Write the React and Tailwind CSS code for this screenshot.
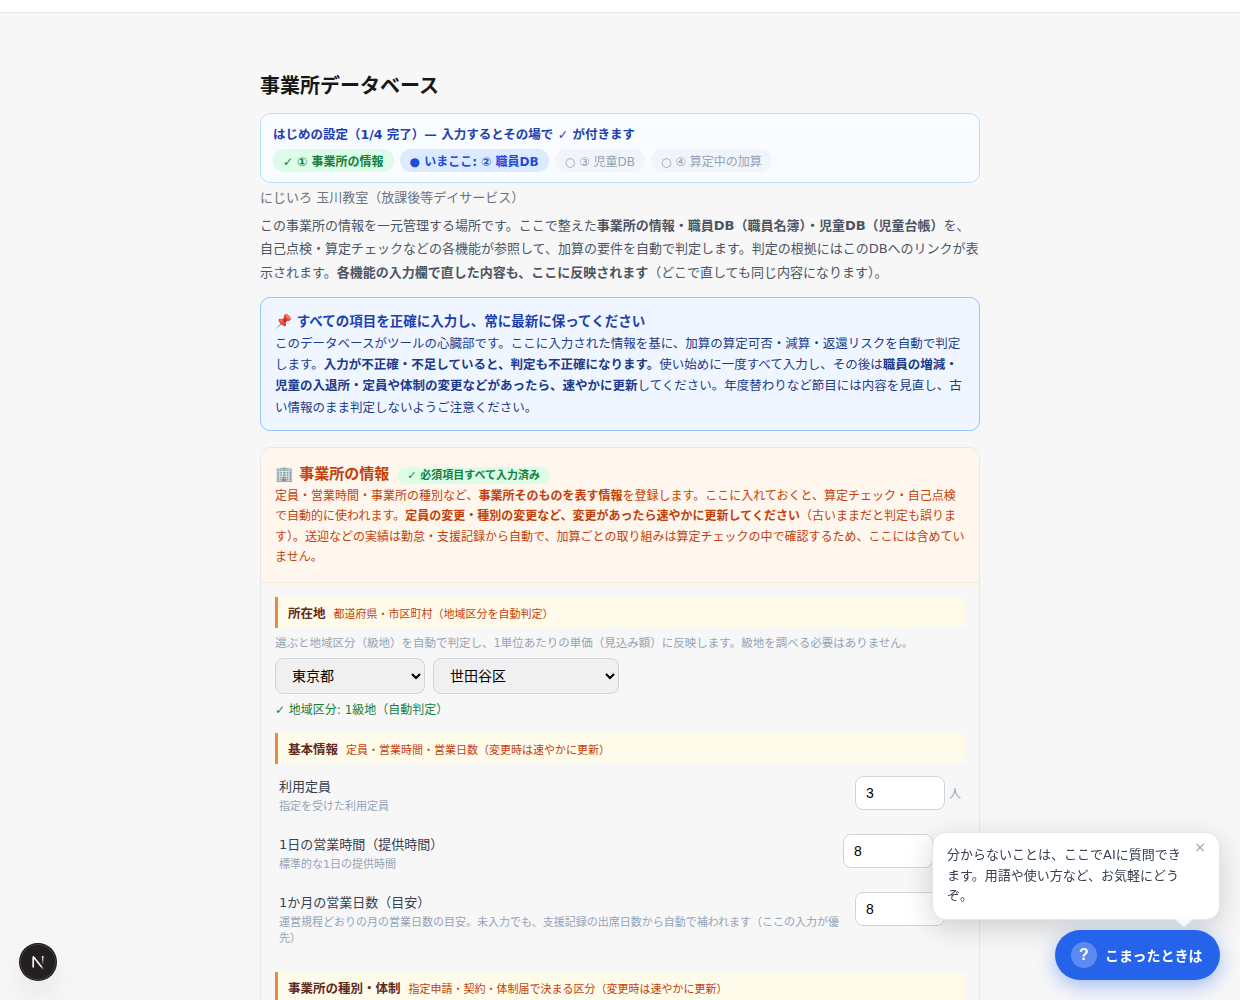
import React from "react";

const steps = [
  { text: "✓ ① 事業所の情報", cls: "bg-[#dcfce7] text-[#15803d] font-bold" },
  { text: "● いまここ: ② 職員DB", cls: "bg-[#dbeafe] text-[#1d4ed8] font-bold" },
  { text: "○ ③ 児童DB", cls: "bg-[#f1f5f9] text-[#94a3b8]" },
  { text: "○ ④ 算定中の加算", cls: "bg-[#f1f5f9] text-[#94a3b8]" },
];

function SectionBar({ title, note }) {
  return (
    <div className="flex h-[31px] items-baseline gap-2 rounded-r-[4px] border-l-[3px] border-[#ea8a3a] bg-[#fffbeb] pt-[7px] pl-[10px] leading-5">
      <span className="text-[12.5px] font-bold text-[#5f2a1c]">{title}</span>
      <span className="text-[11px] text-[#c2410c]">{note}</span>
    </div>
  );
}

function Field({ label, note, value, unit, className }) {
  return (
    <div className={"flex items-start gap-3 px-1 " + className}>
      <div className="min-w-0 flex-1">
        <div className="h-[23px] text-[13px] leading-[22px] text-[#374151]">{label}</div>
        <div className="text-[11px] leading-4 text-[#94a3b8]">{note}</div>
      </div>
      <div className="flex items-center gap-1">
        <input
          className="h-[34px] w-[90px] rounded-lg border border-[#d1d5db] bg-white px-[10px] font-['Liberation_Sans',sans-serif] text-[14px] text-black"
          defaultValue={value}
        />
        <span className="pt-px text-[12px] text-[#94a3b8]">{unit}</span>
      </div>
    </div>
  );
}

function Choice({ value, className }) {
  return (
    <select
      className={
        "h-9 appearance-auto rounded-lg border border-[#d1d5db] bg-[#f0f0f0] px-3 text-[14px] text-black " + className
      }
    >
      <option>{value}</option>
    </select>
  );
}

export default function App() {
  return (
    <div
      lang="ja"
      className="h-[1000px] overflow-hidden bg-[#f7f7f7] font-['DejaVu_Sans','Noto_Sans_CJK_JP',sans-serif] text-[#171717]"
    >
      <div className="h-[13px] border-b border-[#e5e7eb] bg-white" />
      <main className="mx-auto w-[720px] pt-[58px]">
        <h1 className="mb-3 h-[30px] text-[20px] leading-[30px] font-bold">事業所データベース</h1>

        <section className="h-[70px] rounded-[10px] border border-[#bae0fd] bg-[#f8fbff] px-3 pt-[11px]">
          <div className="mb-1 h-5 text-[12.5px] leading-5 font-bold text-[#1e40af]">
            はじめの設定（1/4 完了）— 入力するとその場で ✓ が付きます
          </div>
          <div className="flex gap-[6px]">
            {steps.map((s) => (
              <span
                key={s.text}
                className={"h-[23px] rounded-full px-[10px] pt-[2px] text-[12px] leading-[23px] whitespace-nowrap " + s.cls}
              >
                {s.text}
              </span>
            ))}
          </div>
        </section>

        <div className="h-[31px] pt-1 text-[13px] leading-[22px] text-[#6b7280]">
          にじいろ 玉川教室（放課後等デイサービス）
        </div>
        <p className="h-[83px] text-[13px] leading-[23.4px] text-[#4b5563]">
          この事業所の情報を一元管理する場所です。ここで整えた<b>事業所の情報・職員DB（職員名簿）・児童DB（児童台帳）</b>
          を、自己点検・算定チェックなどの各機能が参照して、加算の要件を自動で判定します。判定の根拠にはこのDBへのリンクが表示されます。
          <b>各機能の入力欄で直した内容も、ここに反映されます</b>（どこで直しても同じ内容になります）。
        </p>

        <section className="h-[134px] rounded-[10px] border border-[#93c5fd] bg-[#eff6ff] px-[14px] py-3">
          <div className="h-[22.9px] text-[13.5px] leading-[23px] font-bold text-[#1e40af]">
            📌 すべての項目を正確に入力し、常に最新に保ってください
          </div>
          <p className="text-[12.5px] leading-[21.25px] text-[#1e3a8a]">
            このデータベースがツールの心臓部です。ここに入力された情報を基に、加算の算定可否・減算・返還リスクを自動で判定します。
            <b>入力が不正確・不足していると、判定も不正確になります。</b>使い始めに一度すべて入力し、その後は
            <b>職員の増減・児童の入退所・定員や体制の変更などがあったら、速やかに更新</b>
            してください。年度替わりなど節目には内容を見直し、古い情報のまま判定しないようご注意ください。
          </p>
        </section>

        <section className="mt-4 overflow-hidden rounded-xl border border-[#e5e7eb] pb-10">
          <header className="h-[135px] border-b border-[#fdebd0] bg-[#fff7ed] px-[14px] pt-[15px]">
            <div className="flex h-[23px] items-center gap-2">
              <h2 className="text-[15px] leading-[23px] font-bold text-[#c2410c]">🏢 事業所の情報</h2>
              <span className="mt-px h-[17px] rounded-full bg-[#dcfce7] px-[10px] text-[11px] leading-[17px] font-bold text-[#15803d]">
                ✓ 必須項目すべて入力済み
              </span>
            </div>
            <p className="text-[12px] leading-[20.4px] text-[#c2410c]">
              定員・営業時間・事業所の種別など、<b>事業所そのものを表す情報</b>
              を登録します。ここに入れておくと、算定チェック・自己点検で自動的に使われます。
              <b>定員の変更・種別の変更など、変更があったら速やかに更新してください</b>
              （古いままだと判定も誤ります）。送迎などの実績は勤怠・支援記録から自動で、加算ごとの取り組みは算定チェックの中で確認するため、ここには含めていません。
            </p>
          </header>

          <div className="px-[14px] pt-[14px]">
            <SectionBar title="所在地" note="都道府県・市区町村（地域区分を自動判定）" />
            <div className="mt-[5px] mb-[5px] h-5 text-[11.5px] leading-5 text-[#94a3b8]">
              選ぶと地域区分（級地）を自動で判定し、1単位あたりの単価（見込み額）に反映します。級地を調べる必要はありません。
            </div>
            <div className="flex gap-2">
              <Choice value="東京都" className="w-[150px]" />
              <Choice value="世田谷区" className="w-[186px]" />
            </div>
            <div className="mt-[6px] mb-[13px] h-5 text-[12px] leading-5 text-[#15803d]">
              ✓ 地域区分: 1級地（自動判定）
            </div>
            <SectionBar title="基本情報" note="定員・営業時間・営業日数（変更時は速やかに更新）" />
            <Field className="mt-3 h-[58px]" label="利用定員" note="指定を受けた利用定員" value="3" unit="人" />
            <Field className="h-[58px]" label="1日の営業時間（提供時間）" note="標準的な1日の提供時間" value="8" unit="時間" />
            <Field
              className="h-[80px]"
              label="1か月の営業日数（目安）"
              note="運営規程どおりの月の営業日数の目安。未入力でも、支援記録の出席日数から自動で補われます（ここの入力が優先）"
              value="8"
              unit="日"
            />
            <SectionBar title="事業所の種別・体制" note="指定申請・契約・体制届で決まる区分（変更時は速やかに更新）" />
          </div>
        </section>
      </main>

      <div className="fixed right-5 bottom-20 h-[88px] w-[288px] rounded-[14px] border border-[#e2e8f0] bg-white py-3 pr-9 pl-[14px] text-[13px] leading-[20.5px] text-[#374151] shadow-[0_8px_28px_rgba(15,23,42,0.18)]">
        分からないことは、ここでAIに質問できます。用語や使い方など、お気軽にどうぞ。
        <button className="absolute top-1 right-[13px] text-[14px] leading-5 text-[#94a3b8]">×</button>
        <span className="absolute right-[29px] -bottom-[7px] h-3 w-3 rotate-45 border-r border-b border-[#e2e8f0] bg-white" />
      </div>

      <button className="fixed right-5 bottom-5 flex h-[50px] w-[165px] items-center gap-2 rounded-full bg-[#2563eb] pl-4 text-[14px] font-bold text-white shadow-[0_6px_20px_rgba(37,99,235,0.4)]">
        <span className="flex h-[26px] w-[26px] items-center justify-center rounded-full bg-white/25 font-['Liberation_Sans',sans-serif] text-[16px] leading-none">
          ?
        </span>
        <span className="pt-[2px] whitespace-nowrap">こまったときは</span>
      </button>

      <div className="fixed bottom-5 left-5 flex h-9 w-9 items-center justify-center rounded-full bg-[#242021] shadow-[0_0_0_1px_#171717,inset_0_0_0_1px_rgba(255,255,255,0.14),0_16px_32px_-8px_rgba(0,0,0,0.24)]">
        <svg width="36" height="36" viewBox="0 0 36 36" fill="none">
          <defs>
            <linearGradient id="diag" x1="17" y1="17" x2="24" y2="25" gradientUnits="userSpaceOnUse">
              <stop stopColor="white" />
              <stop offset="0.6" stopColor="white" />
              <stop offset="1" stopColor="white" stopOpacity="0" />
            </linearGradient>
            <linearGradient id="stem" x1="22.7" y1="12" x2="22.7" y2="21" gradientUnits="userSpaceOnUse">
              <stop stopColor="white" />
              <stop offset="1" stopColor="white" stopOpacity="0" />
            </linearGradient>
          </defs>
          <path d="M13.2 23.5V12.6L23.6 25.5" stroke="url(#diag)" strokeWidth="1.6" strokeLinejoin="bevel" />
          <path d="M22.7 12v11" stroke="url(#stem)" strokeWidth="1.6" />
        </svg>
      </div>
    </div>
  );
}
